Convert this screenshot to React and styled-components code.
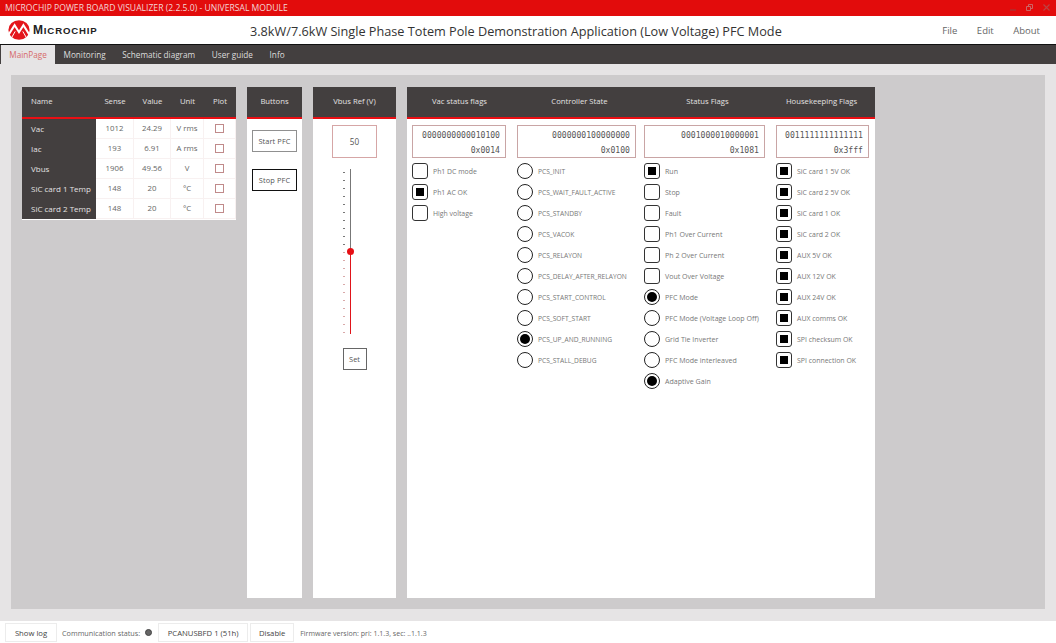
import React from 'react';
import styled, { createGlobalStyle } from 'styled-components';

const Global = createGlobalStyle`
  html, body { margin: 0; padding: 0; height: 100%; background: #fff; }
  #root { height: 643px; }
  * { box-sizing: border-box; }
`;
const Page = styled.div`
  width: 1056px; height: 643px; display: flex; flex-direction: column; overflow: hidden;
  font-family: "Open Sans", "Noto Sans", sans-serif; color: #444;
`;
const TitleBar = styled.div`
  height: 16px; flex: none; background: #e20c0c; color: #f3d6d6; display: flex; align-items: center;
  justify-content: space-between; padding: 0 5px 1px 5px; font-size: 8.6px;
`;
const WinBtns = styled.div`display: flex; gap: 10px; align-items: center; padding-right: 1px;`;
const Header = styled.div`
  height: 29px; flex: none; background: #fff; border-bottom: 1px solid #111; display: flex; align-items: center; padding-left: 8px; padding-right: 16px;
`;
const LogoWrap = styled.div`display: flex; align-items: center; gap: 3px; width: 242px; flex: none;`;
const LogoText = styled.div`
  font-family: "Liberation Sans", sans-serif; color: #222; font-size: 9.6px; font-variant: small-caps; font-weight: 700; letter-spacing: .85px;
  span { font-size: 12px; }
`;
const AppTitle = styled.div`font-size: 12.7px; color: #333; flex: 1; white-space: nowrap; padding-top: 1px;`;
const Menu = styled.div`display: flex; gap: 19.5px; font-size: 9.5px; color: #666; padding-top: 1px;`;
const Tabs = styled.div`height: 19px; flex: none; background: #433f3f; display: flex; padding-left: 1px;`;
const Tab = styled.div`
  height: 100%; display: flex; align-items: center; font-size: 8.2px; padding: 0 8.35px;
  background: ${p => (p.$active ? '#e6e4e5' : 'transparent')};
  color: ${p => (p.$active ? '#d66a6a' : '#ddd')};
`;
const Body = styled.div`flex: 1; background: #e6e4e5; padding: 11px 11px 12px 11px; display: flex; min-height: 0;`;
const Board = styled.div`flex: 1; background: #cdcbcc; padding: 12px 170px 11px 11px; display: flex; align-items: flex-start; gap: 11px;`;
const Card = styled.div`
  background: #fff; flex: none; width: ${p => p.$w}px; height: ${p => (p.$h ? `${p.$h}px` : '100%')};
  display: flex; flex-direction: column; align-items: stretch;
`;
const Head = styled.div`
  height: 32px; flex: none; background: #433f3f; border-bottom: 2px solid #ea0f14; color: #e4e2e2; font-size: 7.7px;
  display: grid; grid-template-columns: ${p => p.$cols || '1fr'}; align-items: center; text-align: center; padding-bottom: 2px;
`;
const HeadLeft = styled.span`text-align: left; padding-left: 9px;`;
const Row = styled.div`display: grid; grid-template-columns: 74px 38px 37px 33px 32px; height: 20px; align-items: center; text-align: center; font-size: 7.8px; color: #666;`;
const NameCell = styled.div`
  background: #433f3f; color: #e4e2e2; height: 100%; display: flex; align-items: center; padding: 0 0 1px 9px; white-space: nowrap; font-size: 8px;
`;
const Cell = styled.div`height: 100%; display: flex; align-items: center; justify-content: center; padding-bottom: 1px; border-right: 1px solid #f8f1f1; border-bottom: 1px solid #f8f1f1;`;
const PlotBox = styled.div`width: 9px; height: 9px; border: 1px solid #c08a8a; background: #fff;`;
const ButtonCol = styled.div`display: flex; flex-direction: column; align-items: center; padding-top: 11px; gap: 17px;`;
const PfcButton = styled.div`
  width: 45px; height: 22px; background: #fff; display: flex; align-items: center; justify-content: center; font-size: 7.4px; color: #555; letter-spacing: .1px;
  border: ${p => (p.$dark ? '1px solid #111' : '1.5px solid #909090')}; white-space: nowrap;
`;
const RefBody = styled.div`display: flex; flex-direction: column; align-items: center; padding-top: 6px;`;
const RefBox = styled.div`width: 45px; height: 33px; border: 1px solid #d6a6a6; display: flex; align-items: center; justify-content: center; font-size: 8.2px; color: #555;`;
const SliderWrap = styled.div`position: relative; width: 24px; height: 165px; margin-top: 11px; margin-left: 1px; display: flex;`;
const Ticks = styled.div`width: 3px; display: flex; flex-direction: column; justify-content: space-between; padding: 3px 0 1px;`;
const Tick = styled.i`display: block; width: 2px; height: 1px; background: ${p => (p.$red ? '#d9a9a9' : '#777')};`;
const Track = styled.div`width: 1px; margin-left: 4px; display: flex; flex-direction: column;`;
const TrackUp = styled.div`height: 82px; background: #777;`;
const TrackDown = styled.div`flex: 1; background: #e0141a;`;
const Thumb = styled.div`position: absolute; left: 4px; top: 79px; width: 7px; height: 7px; border-radius: 50%; background: #e60f14;`;
const SetBtn = styled.div`width: 24px; height: 22px; margin-top: 14px; border: 1px solid #666; display: flex; align-items: center; justify-content: center; font-size: 7.4px; color: #555;`;
const FlagGrid = styled.div`display: grid; grid-template-columns: 105px 127px 132px 94px; padding: 6px 0 0 5px;`;
const FlagCol = styled.div`display: flex; flex-direction: column; min-width: 0; width: ${p => p.$w}px; font-size: ${p => p.$size}px;`;
const Value = styled.div`
  height: 33px; border: 1px solid #c9a5a5; font-family: "DejaVu Sans Mono", "Liberation Mono", monospace; font-size: 8.1px; color: #555;
  display: flex; flex-direction: column; align-items: flex-end; justify-content: space-between; padding: 4px 5px 2px 0; line-height: 10px; margin-bottom: 2.5px;
`;
const FlagRow = styled.div`height: 21px; display: flex; align-items: center; gap: 5px; color: #777; white-space: nowrap;`;
const CheckBox = styled.div`
  width: 16px; height: 16px; flex: none; border: 1px solid #333; border-radius: 3px; display: flex; align-items: center; justify-content: center;
  &::after { content: ""; display: ${p => (p.$on ? 'block' : 'none')}; width: 8px; height: 8px; background: #000; }
`;
const RadioBox = styled.div`
  width: 16px; height: 16px; flex: none; border: 1px solid #222; border-radius: 50%; display: flex; align-items: center; justify-content: center;
  &::after { content: ""; display: ${p => (p.$on ? 'block' : 'none')}; width: 10px; height: 10px; border-radius: 50%; background: #000; }
`;
const StatusBar = styled.div`height: 22px; flex: none; background: #fff; display: flex; align-items: center; padding: 1px 0 0 5px; font-size: 7.7px; color: #555; white-space: nowrap;`;
const StatusBtn = styled.div`height: 19px; border: 1px solid #ececec; display: flex; align-items: center; justify-content: center; width: ${p => p.$w}px; margin-left: ${p => p.$ml || 0}px; color: #444;`;
const StatusText = styled.span`margin-left: ${p => p.$ml}px; color: #666; font-size: ${p => p.$size}px;`;
const Led = styled.div`width: 7px; height: 7px; border-radius: 50%; background: #666; border: 1px solid #444; margin-left: 5px;`;

const Logo = () => (
  <svg width="22" height="20" viewBox="0 0 22 20">
    <ellipse cx="11" cy="10" rx="10.6" ry="9.8" fill="#e4161c" />
    <path d="M.6 14.6 6.6 5.2 11 12.2 15.4 5.2 21.4 14.6" fill="none" stroke="#fff" strokeWidth="2" />
    <path d="M3.4 18 7.2 11.4M18.6 18 14.8 11.4" stroke="#fff" strokeWidth="1" />
  </svg>
);

const rows = [
  ['Vac', '1012', '24.29', 'V rms'], ['Iac', '193', '6.91', 'A rms'], ['Vbus', '1906', '49.56', 'V'],
  ['SiC card 1 Temp', '148', '20', '°C'], ['SiC card 2 Temp', '148', '20', '°C'],
];
const flagCols = [
  { w: 94, size: 6.9, bits: '0000000000010100', hex: '0x0014', kind: 'check', items: [['Ph1 DC mode'], ['Ph1 AC OK', 1], ['High voltage']] },
  { w: 119, size: 6.65, bits: '0000000100000000', hex: '0x0100', kind: 'radio', items: [['PCS_INIT'], ['PCS_WAIT_FAULT_ACTIVE'], ['PCS_STANDBY'], ['PCS_VACOK'], ['PCS_RELAYON'], ['PCS_DELAY_AFTER_RELAYON'], ['PCS_START_CONTROL'], ['PCS_SOFT_START'], ['PCS_UP_AND_RUNNING', 1], ['PCS_STALL_DEBUG']] },
  { w: 121, size: 7.05, bits: '0001000010000001', hex: '0x1081', kind: 'mixed', items: [['Run', 1], ['Stop'], ['Fault'], ['Ph1 Over Current'], ['Ph 2 Over Current'], ['Vout Over Voltage'], ['PFC Mode', 1, 'r'], ['PFC Mode (Voltage Loop Off)', 0, 'r'], ['Grid Tie Inverter', 0, 'r'], ['PFC Mode interleaved', 0, 'r'], ['Adaptive Gain', 1, 'r']] },
  { w: 93, size: 6.95, bits: '0011111111111111', hex: '0x3fff', kind: 'check', items: ['SiC card 1 5V OK', 'SiC card 2 5V OK', 'SiC card 1 OK', 'SiC card 2 OK', 'AUX 5V OK', 'AUX 12V OK', 'AUX 24V OK', 'AUX comms OK', 'SPI checksum OK', 'SPI connection OK'].map(t => [t, 1]) },
];

export default function App() {
  return (
    <Page>
      <Global />
      <TitleBar>
        <span>MICROCHIP POWER BOARD VISUALIZER (2.2.5.0) - UNIVERSAL MODULE</span>
        <WinBtns>
          <svg width="6" height="6" viewBox="0 0 6 6"><path d="M0 5h6" stroke="#a33" strokeWidth="1.4" /></svg>
          <svg width="7" height="7" viewBox="0 0 7 7"><path d="M.5 2.5h4v4h-4zM2.5 2.5V.5h4v4h-2" fill="none" stroke="#c66" /></svg>
          <svg width="7" height="7" viewBox="0 0 7 7"><path d="M.5.5l6 6M6.5.5l-6 6" stroke="#b44" strokeWidth="1.1" /></svg>
        </WinBtns>
      </TitleBar>
      <Header>
        <LogoWrap>
          <Logo />
          <LogoText><span>M</span>ICROCHIP</LogoText>
        </LogoWrap>
        <AppTitle>3.8kW/7.6kW Single Phase Totem Pole Demonstration Application (Low Voltage) PFC Mode</AppTitle>
        <Menu><span>File</span><span>Edit</span><span>About</span></Menu>
      </Header>
      <Tabs>
        <Tab $active>MainPage</Tab><Tab>Monitoring</Tab><Tab>Schematic diagram</Tab><Tab>User guide</Tab><Tab>Info</Tab>
      </Tabs>
      <Body>
        <Board>
          <Card $w={214} $h={133}>
            <Head $cols="74px 38px 37px 33px 32px">
              <HeadLeft>Name</HeadLeft><span>Sense</span><span>Value</span><span>Unit</span><span>Plot</span>
            </Head>
            {rows.map(r => (
              <Row key={r[0]}>
                <NameCell>{r[0]}</NameCell>
                <Cell>{r[1]}</Cell><Cell>{r[2]}</Cell><Cell>{r[3]}</Cell>
                <Cell><PlotBox /></Cell>
              </Row>
            ))}
          </Card>
          <Card $w={55}>
            <Head>Buttons</Head>
            <ButtonCol>
              <PfcButton>Start PFC</PfcButton>
              <PfcButton $dark>Stop PFC</PfcButton>
            </ButtonCol>
          </Card>
          <Card $w={83}>
            <Head>Vbus Ref (V)</Head>
            <RefBody>
              <RefBox>50</RefBox>
              <SliderWrap>
                <Ticks>{Array.from({ length: 21 }, (_, i) => <Tick key={i} $red={i > 9} />)}</Ticks>
                <Track><TrackUp /><TrackDown /></Track>
                <Thumb />
              </SliderWrap>
              <SetBtn>Set</SetBtn>
            </RefBody>
          </Card>
          <Card $w={468}>
            <Head $cols="105px 135px 121px 107px">
              <span>Vac status flags</span><span>Controller State</span><span>Status Flags</span><span>Housekeeping Flags</span>
            </Head>
            <FlagGrid>
              {flagCols.map(c => (
                <FlagCol key={c.hex} $w={c.w} $size={c.size}>
                  <Value><span>{c.bits}</span><span>{c.hex}</span></Value>
                  {c.items.map(([label, on, kind]) => (
                    <FlagRow key={label}>
                      {c.kind === 'radio' || kind === 'r' ? <RadioBox $on={!!on} /> : <CheckBox $on={!!on} />}
                      <span>{label}</span>
                    </FlagRow>
                  ))}
                </FlagCol>
              ))}
            </FlagGrid>
          </Card>
        </Board>
      </Body>
      <StatusBar>
        <StatusBtn $w={52}>Show log</StatusBtn>
        <StatusText $ml={5} $size={7.25}>Communication status:</StatusText>
        <Led />
        <StatusBtn $w={90} $ml={6}>PCANUSBFD 1 (51h)</StatusBtn>
        <StatusBtn $w={44} $ml={2}>Disable</StatusBtn>
        <StatusText $ml={6} $size={7.05}>Firmware version: pri: 1.1.3, sec: ..1.1.3</StatusText>
      </StatusBar>
    </Page>
  );
}
